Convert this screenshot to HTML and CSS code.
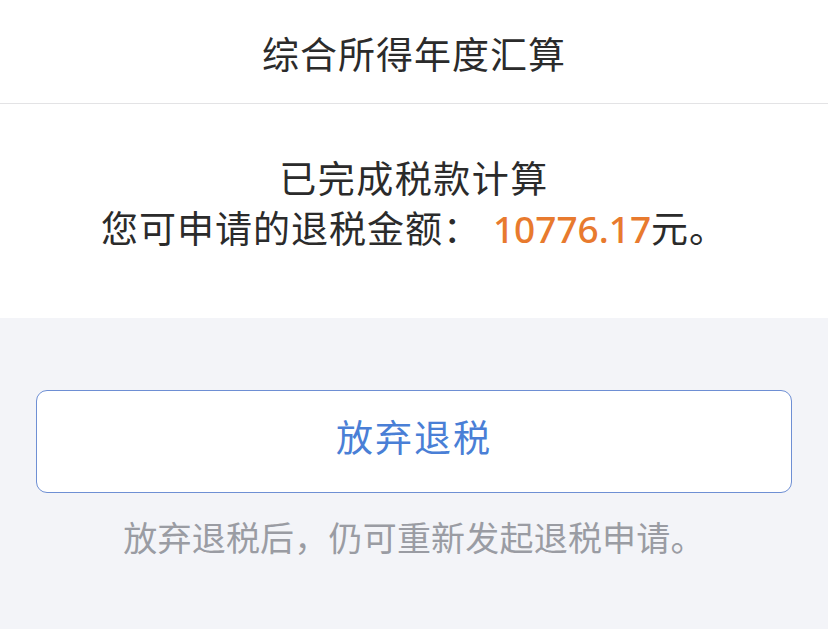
FILE: index.html
```html
<!DOCTYPE html>
<html lang="zh-CN">
<head>
<meta charset="utf-8">
<title>综合所得年度汇算</title>
<link rel="stylesheet" href="styles.css">
</head>
<body>
<header class="nav">
  <h1 class="nav-title">综合所得年度汇算</h1>
</header>
<section class="result">
  <p class="result-line">已完成税款计算</p>
  <p class="result-line result-line-tight">您可申请的退税金额：<span class="amount">10776.17</span>元。</p>
</section>
<section class="actions">
  <button class="btn-outline" type="button">放弃退税</button>
  <p class="hint">放弃退税后，仍可重新发起退税申请。</p>
</section>
</body>
</html>
```
FILE: styles.css
```css
html, body {
  margin: 0;
  padding: 0;
  height: 100%;
}
body {
  font-family: "Noto Sans CJK SC", "Noto Sans", sans-serif;
  background: #f3f4f8;
  color: #333333;
  display: flex;
  flex-direction: column;
}
.nav {
  height: 104px;
  box-sizing: border-box;
  border-bottom: 1px solid #e3e3e5;
  background: #ffffff;
  display: flex;
  align-items: center;
  justify-content: center;
  padding-top: 3px;
}
.nav-title {
  margin: 0;
  font-size: 37px;
  font-weight: 400;
  color: #2b2b2b;
  letter-spacing: 1px;
}
.result {
  background: #ffffff;
  padding: 48px 0 66px;
  text-align: center;
}
.result-line {
  margin: 0;
  font-size: 37px;
  font-weight: 400;
  line-height: 50px;
  color: #2b2b2b;
  letter-spacing: 1.5px;
}
.result-line-tight {
  letter-spacing: 1px;
}
.amount {
  color: #e87a2e;
  font-family: "Noto Sans", "Open Sans", sans-serif;
  font-weight: 500;
  line-height: 1;
  margin-left: 12px;
  letter-spacing: 0;
}
.actions {
  flex: 1;
  padding: 72px 36px 0;
  display: flex;
  flex-direction: column;
}
.btn-outline {
  height: 103px;
  background: #ffffff;
  border: 1.5px solid #6e8fd4;
  border-radius: 11px;
  font-family: "Noto Sans CJK SC", sans-serif;
  font-size: 37px;
  font-weight: 400;
  color: #4a7fd6;
  letter-spacing: 2px;
  padding: 0 0 11px;
}
.hint {
  margin: 22px 0 0;
  text-align: center;
  font-size: 34px;
  line-height: 44px;
  letter-spacing: 0.2px;
  color: #9a9ca3;
}
```
